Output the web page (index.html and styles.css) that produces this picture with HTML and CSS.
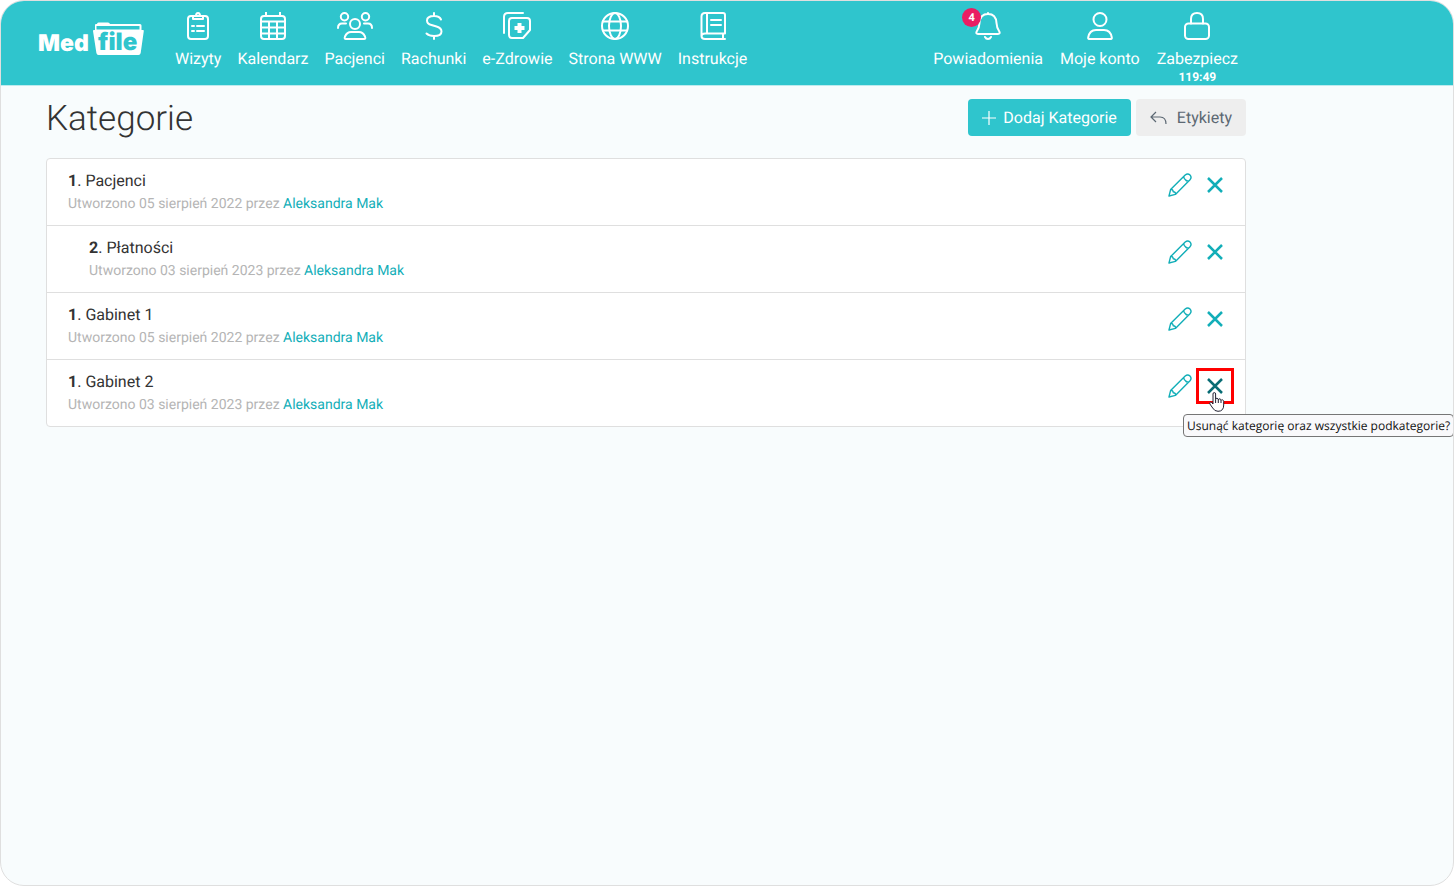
FILE: index.html
```html
<!DOCTYPE html>
<html lang="pl">
<head>
<meta charset="utf-8">
<meta name="viewport" content="width=device-width, initial-scale=1">
<title>Kategorie</title>
<link rel="stylesheet" href="styles.css">
</head>
<body>
<svg class="sprite" aria-hidden="true">
  <symbol id="pencil" viewBox="0 0 24 24">
    <path d="M1 23 2.600 16.600 17.200 2Q19.700 -.1 22 2Q24.100 4.300 22 6.800L7.400 21.400ZM2.600 16.600Q5 16 5.200 18.800Q8 19 7.400 21.400M15.700 3.500Q16 6 17.400 6.600Q18 8 20.500 8.300"/>
  </symbol>
  <symbol id="cross" viewBox="0 0 16 16">
    <path d="M1 1 15 15M15 1 1 15"/>
  </symbol>
</svg>
<div class="app">
  <header class="topbar">
    <div class="topbar-inner">
      <a class="logo" href="#" aria-label="MedFile">
        <svg width="106" height="34" viewBox="0 0 106 34">
          <path class="logo-folder" d="M57 8V3Q57 2 58 2H59Q59 .5 60.500 .5H70Q71.500 .5 72 2H102Q103.500 2 103.500 3.500V8H105Q106 8 105.800 9L102.700 31Q102.300 33 100.500 33H60.500Q58.700 33 58.400 31L55 9Q54.800 8 56 8Z"/>
          <path class="logo-slot" d="M58.500 4H101.500V7.500H58.500Z"/>
          <text class="logo-med" x="0" y="29">Med</text>
          <text class="logo-file" x="60" y="28">file</text>
        </svg>
      </a>
      <nav class="nav">
        <a href="#" class="nav-item">
          <svg width="36" height="28" viewBox="0 0 36 28"><rect x="8" y="4" width="20" height="23" rx="3"/><path d="M13 7V4H16Q16 1 18 1T20 4H23V7ZM17 14H24M17 19H24M12 14H14M12 19H14"/></svg>
          <span>Wizyty</span>
        </a>
        <a href="#" class="nav-item">
          <svg width="36" height="28" viewBox="0 0 36 28"><rect x="6" y="4" width="24" height="23" rx="3"/><path d="M11 0V4M25 0V4M6 9.500H30M6 15.500H30M6 21.500H30M14 9.500V27M22 9.500V27"/></svg>
          <span>Kalendarz</span>
        </a>
        <a href="#" class="nav-item">
          <svg width="36" height="28" viewBox="0 0 36 28"><circle cx="7.500" cy="4.700" r="3.700"/><circle cx="28.500" cy="4.700" r="3.700"/><circle cx="18" cy="12" r="5"/><path d="M1 16Q1 11.500 5 11.500H9M35 16Q35 11.500 31 11.500H27M9 27Q7 27 8 24.500Q10 20 14 20H22Q26 20 28 24.500Q29 27 27 27Z"/></svg>
          <span>Pacjenci</span>
        </a>
        <a href="#" class="nav-item">
          <svg width="36" height="28" viewBox="0 0 36 28"><path d="M18 1V4M18 24V27M25 7.500Q23.500 4 18 4Q11 4 11 8.500Q11 12 15.500 13L20.500 14.500Q25.500 16 25.500 19.500Q25.500 24 18 24Q13 24 10.500 21.500"/></svg>
          <span>Rachunki</span>
        </a>
        <a href="#" class="nav-item">
          <svg width="36" height="28" viewBox="0 0 36 28"><path d="M5 21V5Q5 1 9 1H24M13 6H28Q31 6 31 9V18L24 26H13Q10 26 10 23V9Q10 6 13 6Z"/><path class="plus" d="M20.500 11V21M15.500 16H25.500"/></svg>
          <span>e-Zdrowie</span>
        </a>
        <a href="#" class="nav-item">
          <svg width="36" height="28" viewBox="0 0 36 28"><circle cx="18" cy="14" r="13"/><ellipse cx="18" cy="14" rx="6" ry="13"/><path d="M6 9.500H30M6 18.500H30"/></svg>
          <span>Strona WWW</span>
        </a>
        <a href="#" class="nav-item">
          <svg width="36" height="28" viewBox="0 0 36 28"><path d="M30 21.500V3Q30 1 28 1H10Q6.500 1 6.500 4.500V24Q6.500 27 10 27H30M28 27V21.500M30 21.500H10Q6.500 21.500 6.500 24M12 1V21.500M16 8H26M16 13H26"/></svg>
          <span>Instrukcje</span>
        </a>
      </nav>
      <nav class="nav nav-user">
        <a href="#" class="nav-item">
          <svg width="36" height="28" viewBox="0 0 36 28"><path d="M18 1V2M18 2Q10 2 9.500 11Q9.300 16 6.700 19.500Q5.500 22 8 22H28Q30.500 22 29.300 19.500Q26.700 16 26.500 11Q26 2 18 2M15 25Q16 27 18 27T21 25"/></svg>
          <span class="badge">4</span>
          <span>Powiadomienia</span>
        </a>
        <a href="#" class="nav-item">
          <svg width="36" height="28" viewBox="0 0 36 28"><circle cx="18" cy="7.500" r="6.500"/><path d="M7 27Q6 27 6.200 25.500Q7.500 18 14 18H22Q28.500 18 29.800 25.500Q30 27 29 27Z"/></svg>
          <span>Moje konto</span>
        </a>
        <a href="#" class="nav-item">
          <svg width="36" height="28" viewBox="0 0 36 28"><rect x="6" y="11.500" width="24" height="15.500" rx="3.500"/><path d="M12 11.500V7Q12 1 18 1T24 7V11.500"/></svg>
          <span>Zabezpiecz</span>
          <strong class="timer">119:49</strong>
        </a>
      </nav>
    </div>
  </header>
  <main class="page">
    <div class="page-head">
      <h1>Kategorie</h1>
      <div class="page-actions">
        <button type="button" class="btn btn-primary">
          <svg width="14" height="14" viewBox="0 0 14 14"><path d="M7 0V14M0 7H14"/></svg>Dodaj Kategorie
        </button>
        <button type="button" class="btn btn-muted">
          <svg width="17" height="14" viewBox="0 0 17 14"><path d="M6 1 1 6 6 11M1 6H10Q16 6 16 13"/></svg>Etykiety
        </button>
      </div>
    </div>
    <ul class="categories">
      <li class="category">
        <div class="category-info">
          <p class="category-name"><strong>1</strong>. Pacjenci</p>
          <p class="category-meta">Utworzono 05 sierpień 2022 przez <a href="#">Aleksandra Mak</a></p>
        </div>
        <div class="category-actions">
          <button type="button" class="icon-btn" aria-label="Edytuj"><svg class="pencil" width="24" height="24"><use href="#pencil"/></svg></button>
          <button type="button" class="icon-btn icon-btn-delete" aria-label="Usuń"><svg class="cross" width="16" height="16"><use href="#cross"/></svg></button>
        </div>
      </li>
      <li class="category category-child">
        <div class="category-info">
          <p class="category-name"><strong>2</strong>. Płatności</p>
          <p class="category-meta">Utworzono 03 sierpień 2023 przez <a href="#">Aleksandra Mak</a></p>
        </div>
        <div class="category-actions">
          <button type="button" class="icon-btn" aria-label="Edytuj"><svg class="pencil" width="24" height="24"><use href="#pencil"/></svg></button>
          <button type="button" class="icon-btn icon-btn-delete" aria-label="Usuń"><svg class="cross" width="16" height="16"><use href="#cross"/></svg></button>
        </div>
      </li>
      <li class="category">
        <div class="category-info">
          <p class="category-name"><strong>1</strong>. Gabinet 1</p>
          <p class="category-meta">Utworzono 05 sierpień 2022 przez <a href="#">Aleksandra Mak</a></p>
        </div>
        <div class="category-actions">
          <button type="button" class="icon-btn" aria-label="Edytuj"><svg class="pencil" width="24" height="24"><use href="#pencil"/></svg></button>
          <button type="button" class="icon-btn icon-btn-delete" aria-label="Usuń"><svg class="cross" width="16" height="16"><use href="#cross"/></svg></button>
        </div>
      </li>
      <li class="category">
        <div class="category-info">
          <p class="category-name"><strong>1</strong>. Gabinet 2</p>
          <p class="category-meta">Utworzono 03 sierpień 2023 przez <a href="#">Aleksandra Mak</a></p>
        </div>
        <div class="category-actions">
          <button type="button" class="icon-btn" aria-label="Edytuj"><svg class="pencil" width="24" height="24"><use href="#pencil"/></svg></button>
          <div class="delete-wrap">
            <button type="button" class="icon-btn icon-btn-delete is-active" aria-label="Usuń" aria-describedby="delete-tip"><svg class="cross" width="16" height="16"><use href="#cross"/></svg></button>
            <svg class="cursor" width="16" height="20" viewBox="0 0 16 20"><path d="M4 12V2Q4 .6 5.300 .6T6.600 2V7.500Q6.800 6 8 6.200T9.300 7.800Q9.800 6.500 11 6.900T12 8.500Q12.500 7.500 13.600 7.900T14.700 9.500V13Q14.700 19.300 9 19.300Q5.500 19.300 3.700 16L.9 12Q.2 10.700 1.400 10.300T4 12M6.600 7.500V11M9.300 7.800V11M12 8.500V11"/></svg>
            <span class="tooltip" role="tooltip" id="delete-tip">Usunąć kategorię oraz wszystkie podkategorie?</span>
          </div>
        </div>
      </li>
    </ul>
  </main>
</div>
</body>
</html>
```

FILE: styles.css
```css
* {
  box-sizing: border-box;
}

body {
  margin: 0;
  background: #fff;
  color: #333;
  font-family: Roboto, "Liberation Sans", sans-serif;
  font-size: 16px;
  line-height: 24px;
  text-rendering: geometricPrecision;
}

a {
  color: #12aeb8;
  text-decoration: none;
}

button {
  font: inherit;
  text-rendering: inherit;
  cursor: pointer;
}

svg {
  display: block;
  flex: none;
  fill: none;
}

.sprite {
  position: absolute;
  width: 0;
  height: 0;
}

.app {
  min-height: 100vh;
  border: 1px solid #dfdfdf;
  border-radius: 24px;
  overflow: hidden;
  background: #f8fcfd;
}

.topbar {
  background: #2fc5cd;
  border-bottom: 1px solid #bdebee;
}

.topbar-inner {
  display: flex;
  align-items: flex-start;
  max-width: 1237px;
  min-height: 84px;
  padding: 11px 0 0 37px;
}

.logo {
  margin: 10px 31px 0 0;
}

.logo-folder {
  fill: #fff;
}

.logo-slot {
  fill: #2fc5cd;
}

.logo-med,
.logo-file {
  font-family: Inter, "Liberation Sans", sans-serif;
  font-weight: 900;
}

.logo-med {
  fill: #fff;
  font-size: 23px;
}

.logo-file {
  fill: #2fc5cd;
  font-size: 24px;
}

.nav {
  display: flex;
  gap: 16px;
}

.nav-user {
  gap: 17px;
  margin-left: auto;
}

.nav-item {
  position: relative;
  display: flex;
  flex-direction: column;
  align-items: center;
  color: #fff;
  white-space: nowrap;
}

.nav-item svg {
  margin-bottom: 7px;
  stroke: #fff;
  stroke-width: 2;
  stroke-linecap: round;
  stroke-linejoin: round;
}

.nav-item .plus {
  stroke-width: 4;
  stroke-linecap: butt;
}

.badge {
  position: absolute;
  top: -4px;
  left: 29px;
  width: 19px;
  height: 19px;
  border-radius: 50%;
  background: #e91e63;
  font-size: 11px;
  font-weight: 700;
  line-height: 19px;
  text-align: center;
}

.timer {
  font-size: 12px;
  line-height: 12px;
}

.page {
  max-width: 1245px;
  padding: 13px 0 24px 45px;
}

.page-head {
  display: flex;
  align-items: flex-start;
  justify-content: space-between;
  margin-bottom: 19px;
}

h1 {
  margin: 0;
  font-size: 35px;
  font-weight: 300;
  line-height: 40px;
}

.page-actions {
  display: flex;
  gap: 5px;
}

.btn {
  display: flex;
  align-items: center;
  height: 37px;
  padding: 0 14px;
  border: 0;
  border-radius: 4px;
}

.btn svg {
  stroke: currentColor;
  stroke-width: 1.2;
}

.btn-primary {
  gap: 7px;
  background: #2fc5cd;
  color: #fff;
}

.btn-muted {
  gap: 10px;
  background: #eee;
  color: #5c6873;
}

.categories {
  margin: 0;
  padding: 0;
  border: 1px solid #dfdfdf;
  border-radius: 4px;
  background: #fff;
  list-style: none;
}

.category {
  display: flex;
  align-items: flex-start;
  justify-content: space-between;
  padding: 0 11px 0 21px;
}

.category + .category {
  border-top: 1px solid #dfdfdf;
}

.category-child {
  padding-left: 42px;
}

.category-info {
  padding: 10px 0;
}

.category-name,
.category-meta {
  margin: 0;
}

.category-meta {
  color: #b5b5b5;
  font-size: 14px;
  line-height: 22px;
}

.category-actions {
  display: flex;
  padding-top: 8px;
}

.icon-btn {
  display: grid;
  place-items: center;
  width: 32px;
  height: 36px;
  padding: 0;
  border: 0;
  background: none;
  color: #12aeb8;
}

.icon-btn-delete {
  width: 38px;
}

.is-active {
  border: 3px solid #f00;
  color: #086c74;
}

.pencil {
  stroke: currentColor;
  stroke-width: 1.4;
  stroke-linejoin: round;
}

.cross {
  stroke: currentColor;
  stroke-width: 2.5;
}

.delete-wrap {
  position: relative;
}

.cursor {
  position: absolute;
  top: 24px;
  left: 13px;
  fill: #fff;
  stroke: #223;
  stroke-width: 1;
}

.tooltip {
  position: absolute;
  top: 46px;
  left: -13px;
  padding: 0 3px;
  border: 1px solid #767676;
  border-radius: 4px;
  background: #f9f9fb;
  color: #111;
  font-family: "Open Sans", "Noto Sans", sans-serif;
  font-size: 12px;
  line-height: 21px;
  white-space: nowrap;
}
```
